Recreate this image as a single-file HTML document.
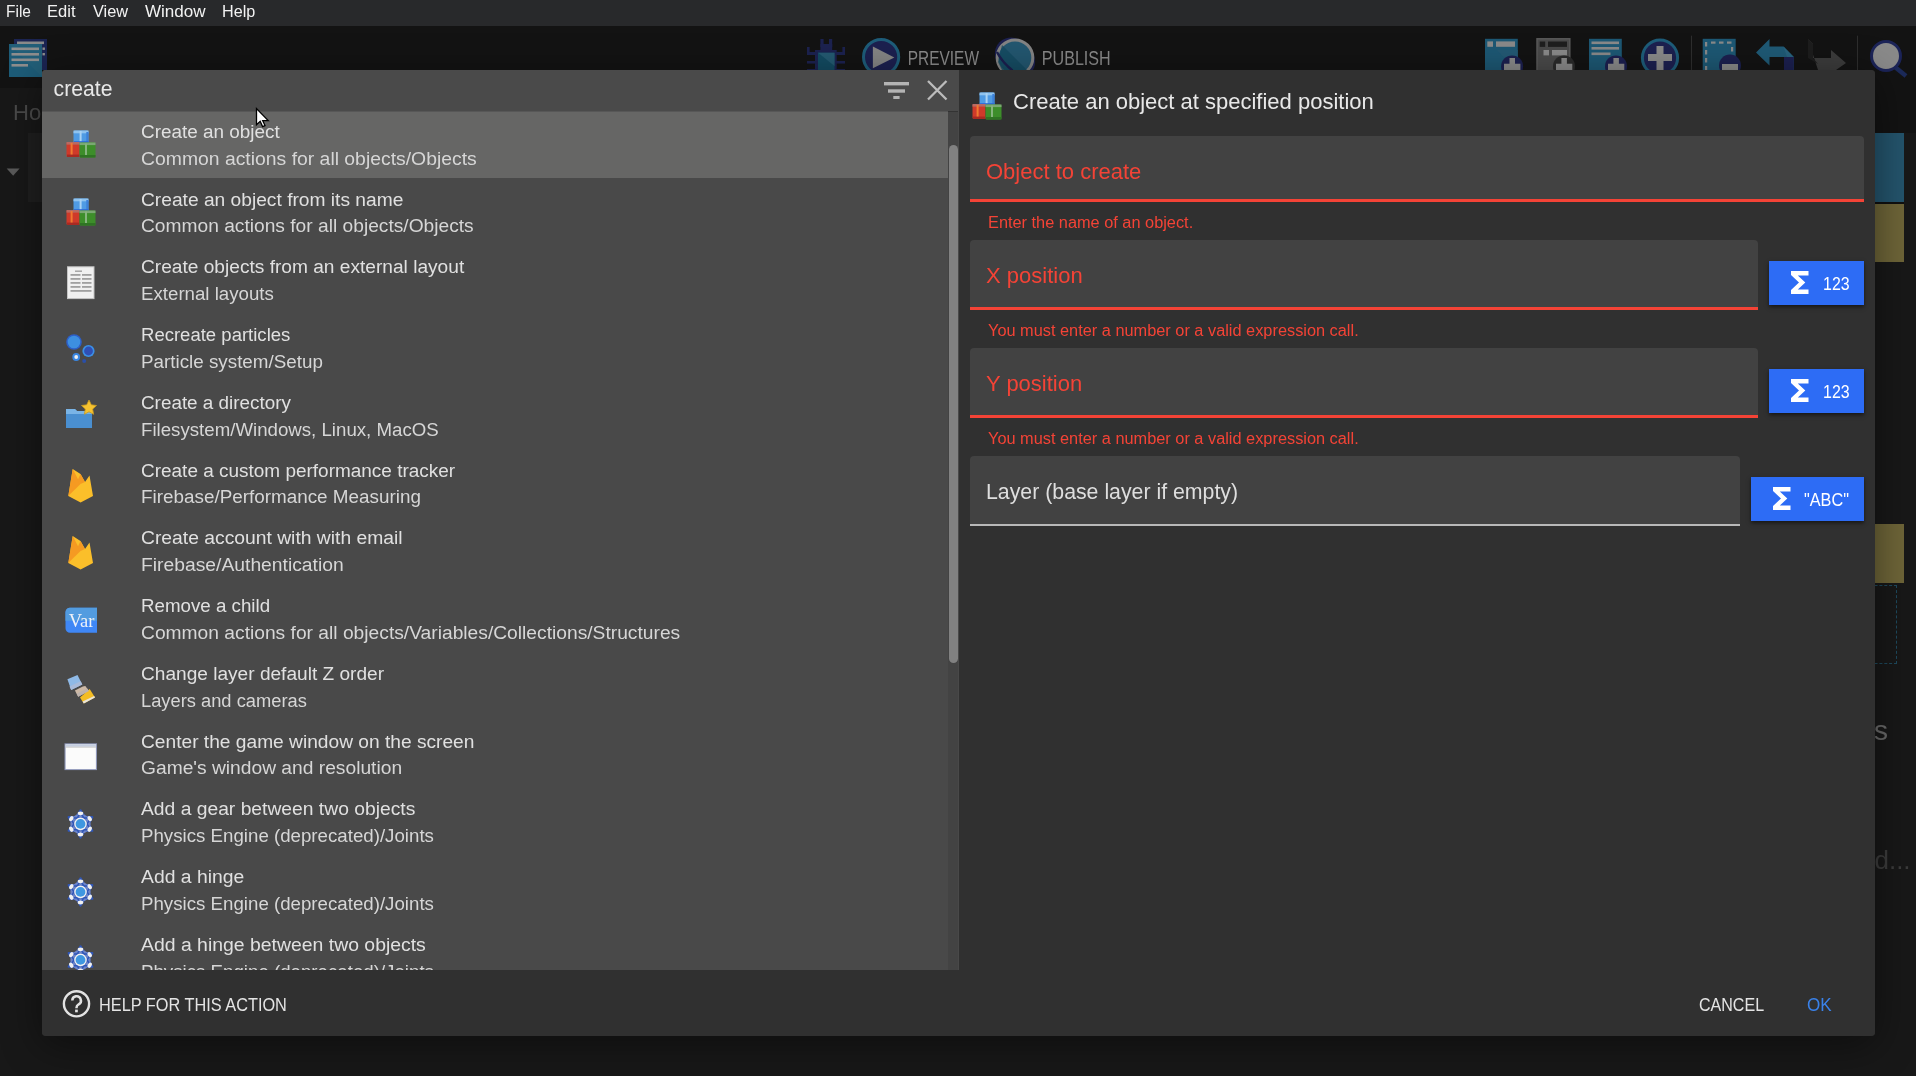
<!DOCTYPE html>
<html><head><meta charset="utf-8">
<style>
*{margin:0;padding:0;box-sizing:border-box}
html,body{width:1916px;height:1076px;overflow:hidden;background:#181818;font-family:"Liberation Sans",sans-serif;-webkit-font-smoothing:antialiased}
#root{position:absolute;left:0;top:0;width:1916px;height:1076px;will-change:transform}
.abs{position:absolute}
.sx{display:inline-block;transform-origin:0 0;white-space:nowrap}
#menubar{left:0;top:0;width:1916px;height:26px;background:#28292b}
.menu{position:absolute;top:0.5px;font-size:17.4px;color:#f2f2f2;line-height:20px;white-space:nowrap;transform-origin:0 0}
#toolbar{left:0;top:26px;width:1916px;height:62px;background:#131313}
#dialog{left:42px;top:70px;width:1833px;height:966px;border-radius:4px;overflow:hidden;background:#303030;box-shadow:0 8px 40px rgba(0,0,0,.45)}
#list{left:0;top:0;width:917px;height:900px;background:#494949;overflow:hidden}
#search{left:0;top:0;width:917px;height:41px;background:#4a4a4a}
#search .q{position:absolute;left:11.6px;top:6.65px;font-size:21.2px;line-height:24px;color:#e8e8e8}
.row{position:absolute;left:0;width:906px;height:67.75px}
.row.sel{background:linear-gradient(#575757 0,#575757 1px,#666665 1px);height:67px}
.t1{position:absolute;transform-origin:0 0;left:99px;top:9.75px;font-size:19.2px;color:#e0e0e0;white-space:nowrap;line-height:22px}
.t2{position:absolute;transform-origin:0 0;left:99px;top:36.6px;font-size:19.2px;color:#d6d6d6;white-space:nowrap;line-height:22px}
.ico{position:absolute;left:19px;top:13.9px;width:40px;height:40px}
.ico svg{display:block}
#track{left:906px;top:41px;width:10px;border-top:1px solid #333;height:859px;background:#434343}
#thumb{left:907px;top:75px;width:9px;height:518px;background:#818181;border-radius:4.5px}
#right{left:917px;top:0;width:916px;height:900px;background:#303030}
.field{position:absolute;background:#424242;border-radius:4px 4px 0 0}
.flabel{position:absolute;left:16px;top:23.2px;font-size:22px;white-space:nowrap;line-height:26px;color:#f44336}
.uline{position:absolute;left:0;right:0;bottom:0;height:3px;background:#f44336}
.helper{position:absolute;left:945.6px;font-size:17.3px;color:#f44336;white-space:nowrap;line-height:20px;transform:scaleX(.945);transform-origin:0 0}
.btn{position:absolute;background:#2d6cf5;box-shadow:0 1.5px 4px rgba(0,0,0,.55);color:#fff}
.btn svg{position:absolute;top:10px}
.btn .bt{position:absolute;font-size:19px;line-height:22px;white-space:nowrap;transform-origin:0 0}
#footer{left:0;top:900px;width:1833px;height:66px;background:#303030}
.ftxt{position:absolute;font-size:19.2px;line-height:22px;white-space:nowrap;transform-origin:0 0}
</style></head><body><div id="root">
<div id="menubar" class="abs">
  <span class="menu" style="left:6px;transform:scaleX(.89)">File</span>
  <span class="menu" style="left:47px;transform:scaleX(.95)">Edit</span>
  <span class="menu" style="left:93px;transform:scaleX(.94)">View</span>
  <span class="menu" style="left:145px;transform:scaleX(.98)">Window</span>
  <span class="menu" style="left:222px;transform:scaleX(.93)">Help</span>
</div>
<div id="toolbar" class="abs"></div>
<div class="abs" style="left:1875px;top:88px;width:41px;height:45px;background:#131313"></div>
<div class="abs" style="left:1875px;top:133px;width:29px;height:69px;background:#24546c"></div>
<div class="abs" style="left:1875px;top:202px;width:29px;height:2px;background:#101010"></div>
<div class="abs" style="left:1875px;top:204px;width:29px;height:58px;background:#6e6538"></div>
<div class="abs" style="left:1875px;top:524px;width:29px;height:58.5px;background:#6e6538"></div>
<div class="abs" style="left:1860px;top:585px;width:37px;height:79px;border:1px dashed #1e4a5e"></div>
<div class="abs" style="left:1874px;top:716px;font-size:28px;line-height:30px;color:#6a6a6a">s</div>
<div class="abs" style="left:1860px;top:845px;font-size:26px;line-height:30px;color:#3c3c3c;white-space:nowrap">ed...</div>
<div class="abs" style="left:13px;top:100px;font-size:22px;line-height:26px;color:#4a4a4a;white-space:nowrap">Home</div>
<div class="abs" style="left:28px;top:133px;width:30px;height:69px;background:#1f1f1f"></div>
<svg class="abs" style="left:6px;top:167px" width="14" height="10" viewBox="0 0 14 10"><path d="M0.7 1.4 H13.6 L7.15 8.8 Z" fill="#5a5a5a"/></svg>
<svg class="abs" style="left:0;top:26px" width="1916" height="62" viewBox="0 26 1916 62">
<!-- app icon -->
<rect x="14" y="39" width="33" height="31" fill="#1b2452"/>
<rect x="17" y="41.5" width="27" height="2.6" fill="#8a8a8a"/>
<path d="M9 44 H42 V77 H9 Z" fill="#1d5c78"/>
<path d="M9 44 H42 V77 Z" fill="#26607a" opacity=".6"/>
<g fill="#8e8e8e"><rect x="11.5" y="47.5" width="27.5" height="2.6"/><rect x="11.5" y="53" width="27.5" height="2.6"/><rect x="11.5" y="58.5" width="27.5" height="2.6"/><rect x="11.5" y="64" width="16.5" height="2.6"/><rect x="42.5" y="47.5" width="2.4" height="2.4"/><rect x="42.5" y="53" width="2.4" height="2.4"/></g>
<!-- bug -->
<g fill="#1c2250">
<rect x="820.4" y="39" width="3.2" height="8"/><rect x="829" y="39" width="3.2" height="8"/>
<rect x="820.4" y="44" width="11.8" height="7"/>
<rect x="815" y="50" width="21.7" height="22"/>
<rect x="807" y="52" width="38" height="3"/><rect x="807" y="61" width="38" height="2.6"/><rect x="807" y="69" width="38" height="2.6"/>
<rect x="807" y="47" width="2.6" height="8"/><rect x="842.4" y="47" width="2.6" height="8"/>
</g>
<path d="M818 52.7 H834.5 V72 H818 Z" fill="#134b62"/><path d="M818 52.7 H834.5 V66 Z" fill="#245a72"/>
<!-- play -->
<circle cx="881.1" cy="57.1" r="17.6" fill="#1c2050" stroke="#1e5d7a" stroke-width="3"/>
<path d="M872.9 46.6 L894.4 57.4 L872.9 68.2 Z" fill="#858585"/>
<text x="907.8" y="65.2" font-family="Liberation Sans" font-size="19.3" fill="#8a8a8a" transform="translate(907.8 0) scale(.80 1) translate(-907.8 0)">PREVIEW</text>
<!-- globe -->
<ellipse cx="1015" cy="57.7" rx="22" ry="18" transform="rotate(45 1015 57.7)" fill="#1c2050"/>
<circle cx="1015" cy="57.7" r="17.8" fill="#235770" stroke="#848484" stroke-width="3"/>
<path d="M1002 45 L1028 71 L1003 72 L998 62 Z" fill="#134a60" opacity=".75"/>
<path d="M997 52 Q1002 62 1012.5 70.5" fill="none" stroke="#1c2050" stroke-width="2.4"/>
<text x="1041.8" y="65.2" font-family="Liberation Sans" font-size="19.3" fill="#8a8a8a" transform="translate(1041.8 0) scale(.835 1) translate(-1041.8 0)">PUBLISH</text>
<!-- icon A -->
<rect x="1485" y="38.8" width="32.8" height="40" fill="#1d5874"/><path d="M1497 50 L1517.8 50 L1517.8 72 Z" fill="#255a74" opacity=".8"/>
<rect x="1487.3" y="41.4" width="5.7" height="5.4" fill="#8a8a8a"/><rect x="1496" y="41.4" width="19" height="5.4" fill="#8a8a8a"/>
<circle cx="1512.1" cy="66.4" r="11" fill="#1c2050"/>
<path d="M1509.5 58 H1515 V63.7 H1520.4 V70 H1504 V63.7 H1509.5 Z" fill="#8a8a8a"/>
<!-- icon B -->
<rect x="1537" y="38.8" width="32.8" height="40" fill="#4a4a4a" stroke="#5a5a5a" stroke-width="1.5"/>
<rect x="1539.7" y="41.5" width="5.5" height="5.4" fill="#1e1e1e"/><rect x="1548" y="41.5" width="19" height="5.4" fill="#1e1e1e"/>
<rect x="1543.5" y="50" width="5.5" height="5.4" fill="#8a8a8a"/><rect x="1552" y="50" width="15" height="5.4" fill="#8a8a8a"/>
<circle cx="1564" cy="66.4" r="11" fill="#2a2a2a"/>
<path d="M1561.4 58 H1566.9 V63.7 H1572.3 V70 H1556 V63.7 H1561.4 Z" fill="#8a8a8a"/>
<!-- icon C -->
<rect x="1589" y="38.8" width="32.8" height="40" fill="#1d5874"/>
<rect x="1591.5" y="41.5" width="27.5" height="2.6" fill="#8a8a8a"/><rect x="1591.5" y="47" width="27.5" height="2.6" fill="#8a8a8a"/><rect x="1591.5" y="52.5" width="19" height="2.6" fill="#8a8a8a"/>
<circle cx="1616" cy="66.4" r="11" fill="#1c2050"/>
<path d="M1613.4 58 H1618.9 V63.7 H1624.3 V70 H1608 V63.7 H1613.4 Z" fill="#8a8a8a"/>
<!-- icon D -->
<circle cx="1660" cy="57.7" r="17.6" fill="#1c2050" stroke="#1e5d7a" stroke-width="3"/>
<path d="M1656.5 46 H1663.5 V54 H1672 V61 H1663.5 V72 H1656.5 V61 H1648 V54 H1656.5 Z" fill="#8a8a8a"/>
<rect x="1691" y="35.7" width="1" height="40" fill="#2e2e2e"/>
<!-- icon E -->
<rect x="1702.7" y="38.8" width="33" height="40" fill="#1d5874"/>
<g fill="#8a8a8a"><rect x="1705" y="42" width="2.2" height="4.5"/><rect x="1711" y="41.5" width="4.5" height="2.2"/><rect x="1719" y="41.5" width="4.5" height="2.2"/><rect x="1727" y="41.5" width="4.5" height="2.2"/><rect x="1731" y="47" width="2.2" height="4.5"/><rect x="1705" y="50" width="2.2" height="4.5"/><rect x="1705" y="58" width="2.2" height="4.5"/><rect x="1705" y="66" width="2.2" height="4.5"/></g>
<circle cx="1730" cy="65.5" r="11" fill="#1c2050"/>
<rect x="1722" y="64" width="16" height="6" fill="#8a8a8a"/>
<!-- undo -->
<path d="M1756 52.5 L1769.5 39 V46.5 H1783.5 L1793.8 57 V70 H1787 V57 H1769.5 V65.5 Z" fill="#1f5a76"/>
<path d="M1783.5 46.5 L1793.8 57 H1787 Z" fill="#28627e"/>
<rect x="1784" y="57" width="9.8" height="13" fill="#1c2050"/>
<!-- redo -->
<path d="M1808 39 L1813 44 V58 H1831 V50 L1846 63 L1836 70 H1818 Z" fill="#3c3c3c"/>
<path d="M1808 39 L1813 44 V58 L1818 64 L1808 58 Z" fill="#1d1d1d"/>
<rect x="1857" y="35.7" width="1" height="40" fill="#2e2e2e"/>
<!-- magnifier -->
<path d="M1895 67 L1906 76" stroke="#1c2a5a" stroke-width="4.5"/>
<circle cx="1886" cy="56" r="14.5" fill="#8a8a8a" stroke="#1c2458" stroke-width="3"/>
</svg>


<div id="dialog" class="abs">
  <div id="list" class="abs">
    <div id="search" class="abs"><span class="q">create</span>
      <svg class="abs" style="left:840px;top:10px" width="30" height="24" viewBox="0 0 30 24">
        <rect x="2" y="2" width="25" height="3.4" fill="#b4b4b4"/><rect x="6" y="9.3" width="17" height="3.4" fill="#b4b4b4"/><rect x="11.3" y="16" width="6.3" height="3" fill="#b4b4b4"/>
      </svg>
      <svg class="abs" style="left:882px;top:7px" width="26" height="26" viewBox="0 0 26 26">
        <path d="M4 4 L22.5 22.5 M22.5 4 L4 22.5" stroke="#bcbcbc" stroke-width="2.3"/>
      </svg>
    </div>
<div class="row sel" style="top:41.00px"><div class="ico"><svg width="40" height="40" viewBox="0 0 40 40">
<rect x="12.5" y="5.5" width="15" height="13" rx="1.5" fill="#4f9be4"/><rect x="12.5" y="5.5" width="15" height="2.8" fill="#8fc3ef"/><rect x="18.6" y="6" width="2" height="11" fill="#a9d2f3"/><rect x="25.3" y="7" width="2.2" height="11" fill="#3d80d8"/><rect x="13" y="16.2" width="14.5" height="2.3" fill="#2c68d6"/>
<rect x="5.5" y="17" width="13" height="15" rx="1.5" fill="#cf3a2a"/><rect x="5.5" y="17" width="13" height="2.6" fill="#b86a62"/><rect x="9.6" y="18" width="2" height="12" fill="#f07a30"/><rect x="6" y="29.6" width="12.5" height="2.4" fill="#a92a22"/>
<rect x="18.5" y="17.5" width="16" height="15" rx="1.5" fill="#3d8e2a"/><rect x="18.5" y="17.5" width="16" height="2.6" fill="#7aa872"/><rect x="24" y="18.5" width="2" height="12.5" fill="#86b47e"/><rect x="19" y="30" width="15.5" height="2.5" fill="#2f7423"/>
</svg></div><div class="t1" style="transform:scaleX(0.9858)">Create an object</div><div class="t2" style="transform:scaleX(1.009)">Common actions for all objects/Objects</div></div>
<div class="row" style="top:108.75px"><div class="ico"><svg width="40" height="40" viewBox="0 0 40 40">
<rect x="12.5" y="5.5" width="15" height="13" rx="1.5" fill="#4f9be4"/><rect x="12.5" y="5.5" width="15" height="2.8" fill="#8fc3ef"/><rect x="18.6" y="6" width="2" height="11" fill="#a9d2f3"/><rect x="25.3" y="7" width="2.2" height="11" fill="#3d80d8"/><rect x="13" y="16.2" width="14.5" height="2.3" fill="#2c68d6"/>
<rect x="5.5" y="17" width="13" height="15" rx="1.5" fill="#cf3a2a"/><rect x="5.5" y="17" width="13" height="2.6" fill="#b86a62"/><rect x="9.6" y="18" width="2" height="12" fill="#f07a30"/><rect x="6" y="29.6" width="12.5" height="2.4" fill="#a92a22"/>
<rect x="18.5" y="17.5" width="16" height="15" rx="1.5" fill="#3d8e2a"/><rect x="18.5" y="17.5" width="16" height="2.6" fill="#7aa872"/><rect x="24" y="18.5" width="2" height="12.5" fill="#86b47e"/><rect x="19" y="30" width="15.5" height="2.5" fill="#2f7423"/>
</svg></div><div class="t1" style="transform:scaleX(1)">Create an object from its name</div><div class="t2" style="transform:scaleX(1)">Common actions for all objects/Objects</div></div>
<div class="row" style="top:176.50px"><div class="ico"><svg width="40" height="40" viewBox="0 0 40 40">
<rect x="6.5" y="6.8" width="26.5" height="31.8" fill="#f0f0f0" stroke="#c4c4c4" stroke-width="1"/>
<g fill="#a0a0a0"><rect x="14" y="10.5" width="7" height="1.4"/><rect x="9.5" y="14" width="10" height="1.8"/><rect x="21" y="14" width="9.5" height="1.8"/><rect x="9.5" y="18" width="10" height="1.8"/><rect x="21" y="18" width="9.5" height="1.8"/><rect x="9.5" y="22" width="10" height="1.8"/><rect x="21" y="22" width="9.5" height="1.8"/><rect x="9.5" y="26" width="10" height="1.8"/><rect x="21" y="26" width="9.5" height="1.8"/><rect x="9.5" y="30" width="21" height="1.8"/></g>
</svg></div><div class="t1" style="transform:scaleX(0.9969)">Create objects from an external layout</div><div class="t2" style="transform:scaleX(0.9735)">External layouts</div></div>
<div class="row" style="top:244.25px"><div class="ico"><svg width="40" height="40" viewBox="0 0 40 40">
<circle cx="13" cy="14" r="7.8" fill="#2d5fc8"/><circle cx="13" cy="14" r="6.3" fill="#3d8fe0"/>
<circle cx="27.5" cy="23" r="6.1" fill="#3b8fe6"/><circle cx="27.5" cy="23" r="4.4" fill="#2f4fb5"/>
<circle cx="15.2" cy="29" r="3.9" fill="#3a86e0"/><circle cx="15.2" cy="29" r="1.9" fill="#f0f0f0"/>
<circle cx="23.2" cy="33" r="2" fill="#2a4fa8"/>
</svg></div><div class="t1" style="transform:scaleX(0.9656)">Recreate particles</div><div class="t2" style="transform:scaleX(0.98)">Particle system/Setup</div></div>
<div class="row" style="top:312.00px"><div class="ico"><svg width="40" height="40" viewBox="0 0 40 40">
<path d="M5 13 h9 l2 2 h15 v17 h-26 z" fill="#4a8fd0"/><path d="M5 13 h9 l2 2 h15 v3 h-26 z" fill="#7ab4e6"/>
<path d="M28 4 l2.3 4.8 5.2 .7 -3.8 3.6 .9 5.2 -4.6 -2.5 -4.6 2.5 .9 -5.2 -3.8 -3.6 5.2 -.7z" fill="#f5c230" stroke="#c89a20" stroke-width=".8"/>
</svg></div><div class="t1" style="transform:scaleX(0.983)">Create a directory</div><div class="t2" style="transform:scaleX(0.9728)">Filesystem/Windows, Linux, MacOS</div></div>
<div class="row" style="top:379.75px"><div class="ico"><svg width="40" height="40" viewBox="0 0 40 40">
<path d="M11.7 5 L7.3 32 L19.6 38.6 L32 32 L28.5 11.5 L24 18 L19.5 10 Z" fill="#fbbf2a"/>
<path d="M11.7 5 L7.3 32 L19.5 20 Z" fill="#f59a22"/>
<path d="M19.5 10 L24 18 L19.5 20 L16.5 16.5 Z" fill="#f59a22"/>
</svg></div><div class="t1" style="transform:scaleX(0.9884)">Create a custom performance tracker</div><div class="t2" style="transform:scaleX(0.9831)">Firebase/Performance Measuring</div></div>
<div class="row" style="top:447.50px"><div class="ico"><svg width="40" height="40" viewBox="0 0 40 40">
<path d="M11.7 5 L7.3 32 L19.6 38.6 L32 32 L28.5 11.5 L24 18 L19.5 10 Z" fill="#fbbf2a"/>
<path d="M11.7 5 L7.3 32 L19.5 20 Z" fill="#f59a22"/>
<path d="M19.5 10 L24 18 L19.5 20 L16.5 16.5 Z" fill="#f59a22"/>
</svg></div><div class="t1" style="transform:scaleX(1.0054)">Create account with with email</div><div class="t2" style="transform:scaleX(1.0055)">Firebase/Authentication</div></div>
<div class="row" style="top:515.25px"><div class="ico"><svg width="40" height="40" viewBox="0 0 40 40">
<path d="M9.5 8.8 h31 v25 h-27 a4.5 4.5 0 0 1 -4.5 -4.5 v-16 a4.5 4.5 0 0 1 4.5 -4.5z" fill="#3f87f6" transform="translate(-4.5 0)"/>
<path d="M9.5 8.8 h31 v13 h-31.5 v-8.5 a4.5 4.5 0 0 1 4.5 -4.5z" fill="#529ce0" transform="translate(-4.5 0)"/>
<text x="20.6" y="27.6" font-family="Liberation Serif" font-size="18.5" fill="#eef2f8" text-anchor="middle">Var</text>
</svg></div><div class="t1" style="transform:scaleX(0.9763)">Remove a child</div><div class="t2" style="transform:scaleX(1.0019)">Common actions for all objects/Variables/Collections/Structures</div></div>
<div class="row" style="top:583.00px"><div class="ico"><svg width="40" height="40" viewBox="0 0 40 40">
<polygon points="6.4,12.3 16.5,8.1 21.3,17.5 10.2,23.1" fill="#8fb9e6"/>
<polygon points="13.9,23.4 21.8,19.6 24.3,18.9 28,24.1 17.2,29.7" fill="#cdb9a6"/>
<polygon points="19,30.5 28.7,21.9 34,30.5 22.8,36.4" fill="#f4bd24"/>
<polygon points="21.6,34.6 33.2,28.9 34,30.5 22.8,36.4" fill="#e8e4dc"/><polygon points="8.5,19.5 19.6,14.2 21.3,17.5 10.2,23.1" fill="#a9bad8"/><polygon points="15.6,26.8 26.2,21.6 28,24.1 17.2,29.7" fill="#bdb3ae"/>
</svg></div><div class="t1" style="transform:scaleX(0.9951)">Change layer default Z order</div><div class="t2" style="transform:scaleX(0.9538)">Layers and cameras</div></div>
<div class="row" style="top:650.75px"><div class="ico"><svg width="40" height="40" viewBox="0 0 40 40">
<rect x="3.5" y="8.3" width="32.5" height="26.8" fill="#8e96b8"/><rect x="4.6" y="9.3" width="30.3" height="24.8" fill="#fbfbfb"/><rect x="4.6" y="9.3" width="30.3" height="2.4" fill="#c4cde0"/><rect x="4.6" y="11.7" width="30.3" height="0.8" fill="#b8b8b8"/>
</svg></div><div class="t1" style="transform:scaleX(0.9988)">Center the game window on the screen</div><div class="t2" style="transform:scaleX(1.0015)">Game's window and resolution</div></div>
<div class="row" style="top:718.50px"><div class="ico"><svg width="40" height="40" viewBox="0 0 40 40">
<g transform="translate(19.5 21.9)">
<g fill="#2f56b8" stroke="#2f56b8" stroke-width="2.2" stroke-linejoin="round">
<path d="M0 -13.6 L11.8 6.8 L-11.8 6.8 Z"/><path d="M0 13.6 L11.8 -6.8 L-11.8 -6.8 Z"/>
</g>
<circle cx="0" cy="0" r="10.2" fill="#6d84c8"/>
<g stroke="#2f56b8" stroke-width="1.5" fill="none"><path d="M0 -11.5 L10 5.8 L-10 5.8 Z"/><path d="M0 11.5 L10 -5.8 L-10 -5.8 Z"/></g>
<g fill="#f0f0f0">
<ellipse cx="0" cy="-10.6" rx="2.8" ry="1.9"/><ellipse cx="0" cy="10.6" rx="2.8" ry="1.9"/>
<ellipse cx="-9.2" cy="-5.3" rx="2.8" ry="1.9" transform="rotate(-60 -9.2 -5.3)"/><ellipse cx="9.2" cy="-5.3" rx="2.8" ry="1.9" transform="rotate(60 9.2 -5.3)"/>
<ellipse cx="-9.2" cy="5.3" rx="2.8" ry="1.9" transform="rotate(60 -9.2 5.3)"/><ellipse cx="9.2" cy="5.3" rx="2.8" ry="1.9" transform="rotate(-60 9.2 5.3)"/>
</g>
<circle cx="0" cy="0" r="6.3" fill="#f2f2f2"/><circle cx="0" cy="0" r="4.9" fill="#3f97e0"/>
</g>
</svg></div><div class="t1" style="transform:scaleX(1.0044)">Add a gear between two objects</div><div class="t2" style="transform:scaleX(0.974)">Physics Engine (deprecated)/Joints</div></div>
<div class="row" style="top:786.25px"><div class="ico"><svg width="40" height="40" viewBox="0 0 40 40">
<g transform="translate(19.5 21.9)">
<g fill="#2f56b8" stroke="#2f56b8" stroke-width="2.2" stroke-linejoin="round">
<path d="M0 -13.6 L11.8 6.8 L-11.8 6.8 Z"/><path d="M0 13.6 L11.8 -6.8 L-11.8 -6.8 Z"/>
</g>
<circle cx="0" cy="0" r="10.2" fill="#6d84c8"/>
<g stroke="#2f56b8" stroke-width="1.5" fill="none"><path d="M0 -11.5 L10 5.8 L-10 5.8 Z"/><path d="M0 11.5 L10 -5.8 L-10 -5.8 Z"/></g>
<g fill="#f0f0f0">
<ellipse cx="0" cy="-10.6" rx="2.8" ry="1.9"/><ellipse cx="0" cy="10.6" rx="2.8" ry="1.9"/>
<ellipse cx="-9.2" cy="-5.3" rx="2.8" ry="1.9" transform="rotate(-60 -9.2 -5.3)"/><ellipse cx="9.2" cy="-5.3" rx="2.8" ry="1.9" transform="rotate(60 9.2 -5.3)"/>
<ellipse cx="-9.2" cy="5.3" rx="2.8" ry="1.9" transform="rotate(60 -9.2 5.3)"/><ellipse cx="9.2" cy="5.3" rx="2.8" ry="1.9" transform="rotate(-60 9.2 5.3)"/>
</g>
<circle cx="0" cy="0" r="6.3" fill="#f2f2f2"/><circle cx="0" cy="0" r="4.9" fill="#3f97e0"/>
</g>
</svg></div><div class="t1" style="transform:scaleX(1.0078)">Add a hinge</div><div class="t2" style="transform:scaleX(0.974)">Physics Engine (deprecated)/Joints</div></div>
<div class="row" style="top:854.00px"><div class="ico"><svg width="40" height="40" viewBox="0 0 40 40">
<g transform="translate(19.5 21.9)">
<g fill="#2f56b8" stroke="#2f56b8" stroke-width="2.2" stroke-linejoin="round">
<path d="M0 -13.6 L11.8 6.8 L-11.8 6.8 Z"/><path d="M0 13.6 L11.8 -6.8 L-11.8 -6.8 Z"/>
</g>
<circle cx="0" cy="0" r="10.2" fill="#6d84c8"/>
<g stroke="#2f56b8" stroke-width="1.5" fill="none"><path d="M0 -11.5 L10 5.8 L-10 5.8 Z"/><path d="M0 11.5 L10 -5.8 L-10 -5.8 Z"/></g>
<g fill="#f0f0f0">
<ellipse cx="0" cy="-10.6" rx="2.8" ry="1.9"/><ellipse cx="0" cy="10.6" rx="2.8" ry="1.9"/>
<ellipse cx="-9.2" cy="-5.3" rx="2.8" ry="1.9" transform="rotate(-60 -9.2 -5.3)"/><ellipse cx="9.2" cy="-5.3" rx="2.8" ry="1.9" transform="rotate(60 9.2 -5.3)"/>
<ellipse cx="-9.2" cy="5.3" rx="2.8" ry="1.9" transform="rotate(60 -9.2 5.3)"/><ellipse cx="9.2" cy="5.3" rx="2.8" ry="1.9" transform="rotate(-60 9.2 5.3)"/>
</g>
<circle cx="0" cy="0" r="6.3" fill="#f2f2f2"/><circle cx="0" cy="0" r="4.9" fill="#3f97e0"/>
</g>
</svg></div><div class="t1" style="transform:scaleX(1.0114)">Add a hinge between two objects</div><div class="t2" style="transform:scaleX(0.974)">Physics Engine (deprecated)/Joints</div></div>
    <div id="track" class="abs"></div>
    <div id="thumb" class="abs"></div>
  </div>
  <div id="right" class="abs"></div>
  <!-- title -->
  <div class="abs" style="left:925px;top:16.5px;width:40px;height:40px"><svg width="40" height="40" viewBox="0 0 40 40">
<rect x="12.5" y="5.5" width="15" height="13" rx="1.5" fill="#4f9be4"/><rect x="12.5" y="5.5" width="15" height="2.8" fill="#8fc3ef"/><rect x="18.6" y="6" width="2" height="11" fill="#a9d2f3"/><rect x="25.3" y="7" width="2.2" height="11" fill="#3d80d8"/><rect x="13" y="16.2" width="14.5" height="2.3" fill="#2c68d6"/>
<rect x="5.5" y="17" width="13" height="15" rx="1.5" fill="#cf3a2a"/><rect x="5.5" y="17" width="13" height="2.6" fill="#b86a62"/><rect x="9.6" y="18" width="2" height="12" fill="#f07a30"/><rect x="6" y="29.6" width="12.5" height="2.4" fill="#a92a22"/>
<rect x="18.5" y="17.5" width="16" height="15" rx="1.5" fill="#3d8e2a"/><rect x="18.5" y="17.5" width="16" height="2.6" fill="#7aa872"/><rect x="24" y="18.5" width="2" height="12.5" fill="#86b47e"/><rect x="19" y="30" width="15.5" height="2.5" fill="#2f7423"/>
</svg></div>
  <div class="abs" style="left:971px;top:18.9px;font-size:22px;line-height:26px;color:#e8e8e8;white-space:nowrap">Create an object at specified position</div>

  <div class="field" style="left:928px;top:66px;width:894px;height:66px"><div class="flabel">Object to create</div><div class="uline"></div></div>
  <div class="helper" style="top:142px">Enter the name of an object.</div>

  <div class="field" style="left:928px;top:170px;width:788px;height:70px"><div class="flabel">X position</div><div class="uline"></div></div>
  <div class="helper" style="top:250px">You must enter a number or a valid expression call.</div>
  <div class="btn" style="left:1727px;top:191px;width:95px;height:44px"><svg style="left:22px;top:10px" width="18" height="23" viewBox="0 0 18 23"><path d="M0 0 H17.5 V4.6 H6.8 L14.3 11.5 L6.8 18.4 H17.5 V23 H0 V18.9 L8 11.5 L0 4.1 Z" fill="#fff"/></svg><span class="bt" style="left:53.5px;top:12px;transform:scaleX(.84)">123</span></div>

  <div class="field" style="left:928px;top:278px;width:788px;height:70px"><div class="flabel" style="top:23.2px">Y position</div><div class="uline"></div></div>
  <div class="helper" style="top:358.2px">You must enter a number or a valid expression call.</div>
  <div class="btn" style="left:1727px;top:299px;width:95px;height:44px"><svg style="left:22px;top:10px" width="18" height="23" viewBox="0 0 18 23"><path d="M0 0 H17.5 V4.6 H6.8 L14.3 11.5 L6.8 18.4 H17.5 V23 H0 V18.9 L8 11.5 L0 4.1 Z" fill="#fff"/></svg><span class="bt" style="left:53.5px;top:12px;transform:scaleX(.84)">123</span></div>

  <div class="field" style="left:928px;top:386px;width:770px;height:70px"><div class="flabel" style="top:22.6px;color:#dedede;font-size:21.3px">Layer (base layer if empty)</div><div class="uline" style="height:2px;background:#b8b8b8"></div></div>
  <div class="btn" style="left:1709px;top:407px;width:113px;height:44px"><svg style="left:22px;top:10px" width="18" height="23" viewBox="0 0 18 23"><path d="M0 0 H17.5 V4.6 H6.8 L14.3 11.5 L6.8 18.4 H17.5 V23 H0 V18.9 L8 11.5 L0 4.1 Z" fill="#fff"/></svg><span class="bt" style="left:53.4px;top:12px;transform:scaleX(.856)">"ABC"</span></div>

  <div id="footer" class="abs">
    <svg class="abs" style="left:19px;top:18.5px" width="30" height="30" viewBox="0 0 30 30">
      <circle cx="15.5" cy="14.8" r="12.6" fill="none" stroke="#e2e2e2" stroke-width="2.4"/>
      <path d="M11.3 11.6 a4.3 4.3 0 1 1 6.4 3.7 c-1.6 1 -2.2 1.6 -2.2 3.4 v0.6" fill="none" stroke="#e2e2e2" stroke-width="2.5"/>
      <rect x="14.1" y="20.6" width="2.7" height="2.7" fill="#e2e2e2"/>
    </svg>
    <span class="ftxt" style="left:56.5px;top:24.2px;color:#e4e4e4;transform:scaleX(.85)">HELP FOR THIS ACTION</span>
    <span class="ftxt" style="left:1657px;top:24.2px;color:#e4e4e4;transform:scaleX(.836)">CANCEL</span>
    <span class="ftxt" style="left:1765.4px;top:24.2px;color:#3a82ea;transform:scaleX(.89)">OK</span>
  </div>
</div>
<svg class="abs" style="left:254px;top:106px" width="18" height="24" viewBox="-2 -2 18 24"><path d="M0.5 0.5 L0.5 16.8 L4.2 13.3 L6.6 18.6 L9 17.6 L6.7 12.6 L12.2 12.6 Z" fill="#fff" stroke="#000" stroke-width="1.3" stroke-linejoin="miter"/></svg>
</div></body></html>
